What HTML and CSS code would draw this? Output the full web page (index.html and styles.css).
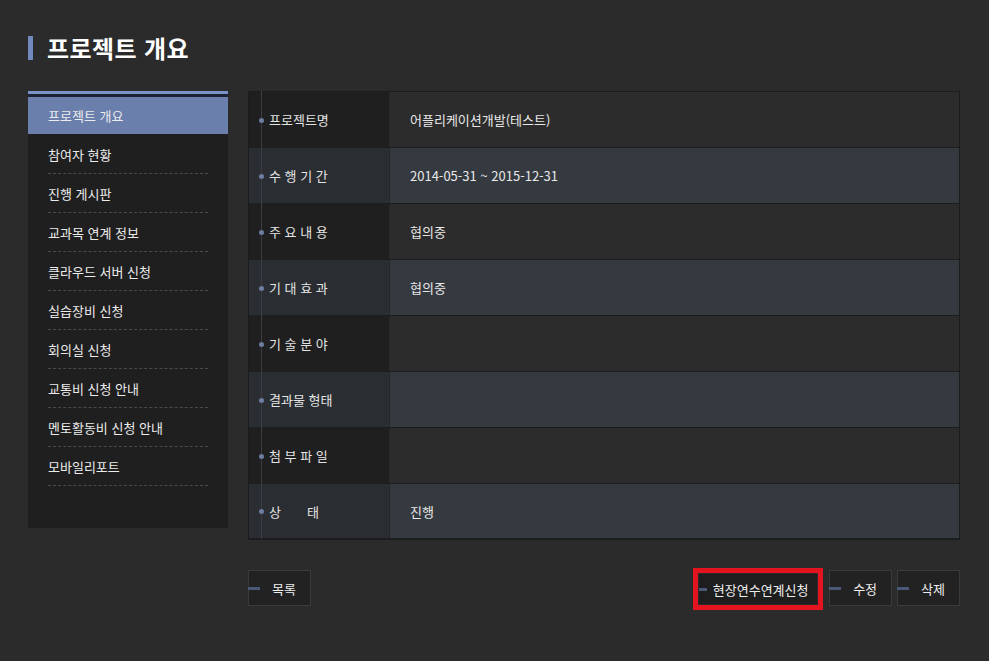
FILE: index.html
```html
<!DOCTYPE html>
<html lang="ko">
<head>
<meta charset="utf-8">
<title>프로젝트 개요</title>
<link rel="stylesheet" href="styles.css">
</head>
<body>
<div class="page">
  <h1 class="title">프로젝트 개요</h1>
  <div class="content">
    <nav class="sidebar">
      <a class="side-item active">프로젝트 개요</a>
      <a class="side-item">참여자 현황</a>
      <a class="side-item">진행 게시판</a>
      <a class="side-item">교과목 연계 정보</a>
      <a class="side-item">클라우드 서버 신청</a>
      <a class="side-item">실습장비 신청</a>
      <a class="side-item">회의실 신청</a>
      <a class="side-item">교통비 신청 안내</a>
      <a class="side-item">멘토활동비 신청 안내</a>
      <a class="side-item">모바일리포트</a>
    </nav>
    <div class="main">
      <div class="table">
        <div class="row odd"><div class="label"><span class="dot"></span>프로젝트명</div><div class="value">어플리케이션개발(테스트)</div></div>
        <div class="row even"><div class="label"><span class="dot"></span>수 행 기 간</div><div class="value">2014-05-31 ~ 2015-12-31</div></div>
        <div class="row odd"><div class="label"><span class="dot"></span>주 요 내 용</div><div class="value">협의중</div></div>
        <div class="row even"><div class="label"><span class="dot"></span>기 대 효 과</div><div class="value">협의중</div></div>
        <div class="row odd"><div class="label"><span class="dot"></span>기 술 분 야</div><div class="value"></div></div>
        <div class="row even"><div class="label"><span class="dot"></span>결과물 형태</div><div class="value"></div></div>
        <div class="row odd"><div class="label"><span class="dot"></span>첨 부 파 일</div><div class="value"></div></div>
        <div class="row even"><div class="label"><span class="dot"></span>상<span class="wide"></span>태</div><div class="value">진행</div></div>
      </div>
      <div class="actions">
        <button class="btn btn-list">목록</button>
        <div class="right">
          <div class="highlight"><button class="btn btn-long">현장연수연계신청</button></div>
          <button class="btn">수정</button>
          <button class="btn">삭제</button>
        </div>
      </div>
    </div>
  </div>
</div>
</body>
</html>
```

FILE: styles.css
```css
* { box-sizing: border-box; }
html, body {
  margin: 0;
  padding: 0;
  background: #2b2b2b;
  font-family: "Noto Sans CJK KR", "Noto Sans", sans-serif;
  color: #e6e6e6;
}
.page {
  padding: 36px 29px 0 28px;
}
.title {
  margin: 0;
  height: 24px;
  line-height: 24px;
  border-left: 5px solid #7189bd;
  padding-left: 14px;
  font-size: 24px;
  font-weight: 700;
  color: #ffffff;
  letter-spacing: 0.4px;
}
.content {
  display: flex;
  gap: 20px;
  margin-top: 31px;
}
.sidebar {
  width: 200px;
  height: 437px;
  flex: none;
  background: #1f1f1f;
  border-top: 3px solid #7b93c6;
  box-shadow: inset 0 3px 0 #1b2132;
  padding-top: 3px;
  display: flex;
  flex-direction: column;
}
.side-item {
  display: flex;
  align-items: center;
  height: 39px;
  margin: 0 20px;
  font-size: 13px;
  color: #ececec;
  border-bottom: 1px dashed #4a4a4a;
}
.side-item.active {
  margin: 0;
  height: 37px;
  padding-left: 20px;
  background: #6a7fac;
  border-bottom: none;
  margin-bottom: 1px;
}
.main {
  width: 712px;
  display: flex;
  flex-direction: column;
}
.table {
  border: 1px solid #1c1c1c;
  display: flex;
  flex-direction: column;
}
.row {
  display: flex;
  height: 56px;
  border-bottom: 1px solid #1d1d1d;
}
.row:last-child { height: 55px; }
.label {
  width: 141px;
  flex: none;
  display: flex;
  align-items: center;
  font-size: 13px;
  color: #e4e4e4;
  padding-left: 20px;
  position: relative;
  border-right: 1px solid #262626;
}
.label::before {
  content: "";
  position: absolute;
  left: 12px;
  top: -1px;
  bottom: -1px;
  width: 1px;
  background: #3b3e44;
}
.dot {
  position: absolute;
  left: 10px;
  top: 50%;
  width: 5px;
  height: 5px;
  margin-top: -2px;
  border-radius: 50%;
  background: #6f7ca2;
}
.wide { display: inline-block; width: 26px; }
.value {
  flex: 1;
  display: flex;
  align-items: center;
  padding-left: 20px;
  font-size: 13px;
  color: #e8e8e8;
}
.odd .label { background: #1f1f1f; }
.odd .value { background: #2c2c2c; }
.even .label { background: #2a2d32; }
.even .value { background: #353940; }
.actions {
  display: flex;
  justify-content: space-between;
  align-items: flex-start;
  margin-top: 30px;
}
.right {
  display: flex;
  align-items: flex-start;
  gap: 5px;
}
.btn {
  position: relative;
  height: 36px;
  min-width: 62px;
  padding: 0 14px 0 23px;
  background: #222222;
  border: 1px solid #3a3a3a;
  color: #eeeeee;
  font-family: "Noto Sans CJK KR", "Noto Sans", sans-serif;
  font-size: 13px;
  cursor: pointer;
}
.btn::before {
  content: "";
  position: absolute;
  left: -1px;
  top: 50%;
  width: 12px;
  height: 3px;
  margin-top: -1px;
  background: #4a5878;
}
.highlight {
  border: 5px solid #e3141f;
  margin-top: -2px;
  margin-right: 1px;
  display: flex;
  flex: none;
}
.btn-long {
  height: 32px;
  width: 120px;
  padding: 0 8px 0 13px;
  border-color: #2a2a2a;
  background: #1e1e1e;
}
.btn-long::before { width: 8px; left: 0; }
```
